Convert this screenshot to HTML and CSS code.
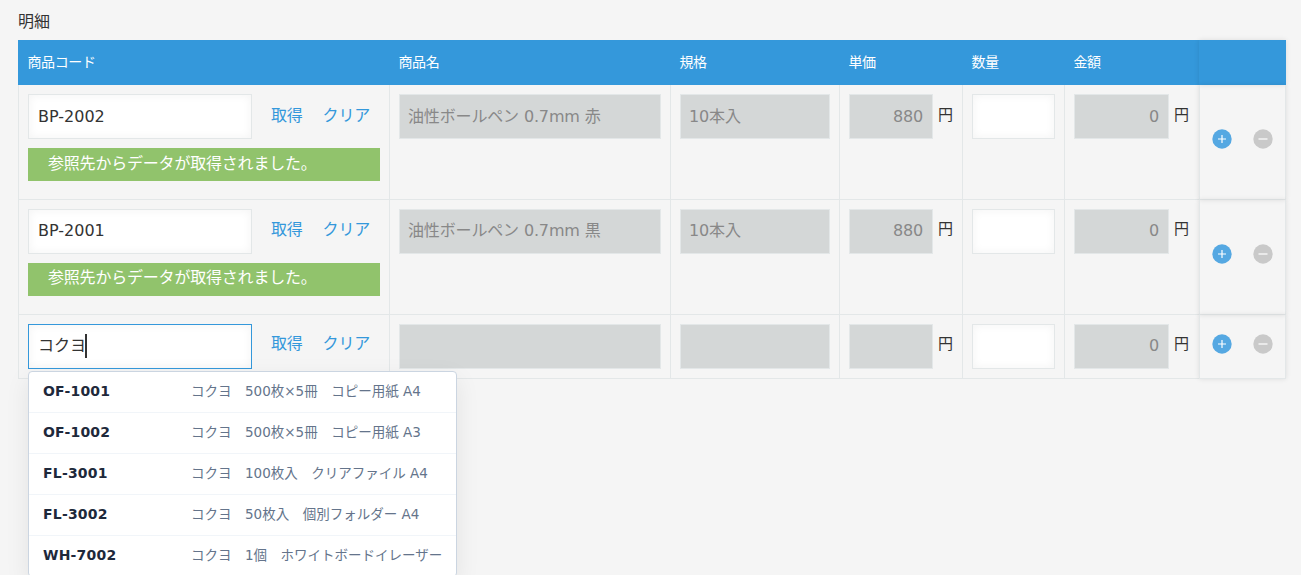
FILE: index.html
```html
<!DOCTYPE html>
<html lang="ja">
<head>
  <meta charset="UTF-8">
  <meta name="viewport" content="width=device-width, initial-scale=1.0">
  <title>明細</title>
  <link rel="stylesheet" href="styles.css">
</head>
<body>
  <div class="subtable">
    <div class="subtable-label">明細</div>

    <div class="row header">
      <div class="th">商品コード</div>
      <div class="th">商品名</div>
      <div class="th">規格</div>
      <div class="th">単価</div>
      <div class="th">数量</div>
      <div class="th">金額</div>
      <div class="th actions"></div>
    </div>

    <div class="row">
      <div class="cell">
        <div class="lookup">
          <div class="input code">BP-2002</div>
          <a class="link">取得</a>
          <a class="link">クリア</a>
        </div>
        <div class="success">参照先からデータが取得されました。</div>
      </div>
      <div class="cell"><div class="input disabled">油性ボールペン 0.7mm 赤</div></div>
      <div class="cell"><div class="input disabled">10本入</div></div>
      <div class="cell unit-cell"><div class="input disabled number">880</div><span class="unit">円</span></div>
      <div class="cell"><div class="input"></div></div>
      <div class="cell unit-cell amount"><div class="input disabled number">0</div><span class="unit">円</span></div>
      <div class="cell actions">
        <svg class="icon add" viewBox="0 0 20 20"><circle cx="10" cy="10" r="9.7"/><path d="M6 10h8M10 6v8"/></svg>
        <svg class="icon remove" viewBox="0 0 20 20"><circle cx="10" cy="10" r="9.7"/><path d="M5.5 10h9"/></svg>
      </div>
    </div>

    <div class="row tight">
      <div class="cell">
        <div class="lookup">
          <div class="input code">BP-2001</div>
          <a class="link">取得</a>
          <a class="link">クリア</a>
        </div>
        <div class="success">参照先からデータが取得されました。</div>
      </div>
      <div class="cell"><div class="input disabled">油性ボールペン 0.7mm 黒</div></div>
      <div class="cell"><div class="input disabled">10本入</div></div>
      <div class="cell unit-cell"><div class="input disabled number">880</div><span class="unit">円</span></div>
      <div class="cell"><div class="input"></div></div>
      <div class="cell unit-cell amount"><div class="input disabled number">0</div><span class="unit">円</span></div>
      <div class="cell actions">
        <svg class="icon add" viewBox="0 0 20 20"><circle cx="10" cy="10" r="9.7"/><path d="M6 10h8M10 6v8"/></svg>
        <svg class="icon remove" viewBox="0 0 20 20"><circle cx="10" cy="10" r="9.7"/><path d="M5.5 10h9"/></svg>
      </div>
    </div>

    <div class="row tight short">
      <div class="cell">
        <div class="lookup">
          <div class="input code focused">コクヨ<span class="caret"></span></div>
          <a class="link">取得</a>
          <a class="link">クリア</a>

          <!-- Suggestions -->
          <div class="suggest">
            <div class="suggest-item"><b class="suggest-code">OF-1001</b><span class="suggest-name">コクヨ　500枚×5冊　コピー用紙 A4</span></div>
            <div class="suggest-item"><b class="suggest-code">OF-1002</b><span class="suggest-name">コクヨ　500枚×5冊　コピー用紙 A3</span></div>
            <div class="suggest-item"><b class="suggest-code">FL-3001</b><span class="suggest-name">コクヨ　100枚入　クリアファイル A4</span></div>
            <div class="suggest-item"><b class="suggest-code">FL-3002</b><span class="suggest-name">コクヨ　50枚入　個別フォルダー A4</span></div>
            <div class="suggest-item"><b class="suggest-code">WH-7002</b><span class="suggest-name">コクヨ　1個　ホワイトボードイレーザー</span></div>
          </div>
        </div>
      </div>
      <div class="cell"><div class="input disabled"></div></div>
      <div class="cell"><div class="input disabled"></div></div>
      <div class="cell unit-cell"><div class="input disabled number"></div><span class="unit">円</span></div>
      <div class="cell"><div class="input"></div></div>
      <div class="cell unit-cell amount"><div class="input disabled number">0</div><span class="unit">円</span></div>
      <div class="cell actions">
        <svg class="icon add" viewBox="0 0 20 20"><circle cx="10" cy="10" r="9.7"/><path d="M6 10h8M10 6v8"/></svg>
        <svg class="icon remove" viewBox="0 0 20 20"><circle cx="10" cy="10" r="9.7"/><path d="M5.5 10h9"/></svg>
      </div>
    </div>
  </div>
</body>
</html>
```
FILE: styles.css
```css
* {
  box-sizing: border-box;
}

body {
  margin: 0;
  height: 575px;
  overflow: hidden;
  background: #f5f5f5;
  color: #333;
  font-family: "DejaVu Sans", "Noto Sans CJK JP", sans-serif;
  font-size: 16px;
}

.subtable {
  width: 1268px;
  margin-left: 18px;
}

.subtable-label {
  height: 40px;
  padding-top: 10px;
  line-height: 24px;
}

.row {
  display: grid;
  grid-template-columns: 371px 281px 169px 123px 102px 135px 87px;
  height: 115px;
}

.header {
  height: 45px;
  background: #3498db;
  color: #fff;
  font-size: 14px;
  letter-spacing: -0.4px;
}

.short {
  height: 64px;
}

.th {
  padding: 12px 9.5px;
  line-height: 20px;
}

.cell {
  padding: 9px;
  border-left: 1px solid #e3e7e8;
  border-bottom: 1px solid #e3e7e8;
}

.lookup {
  position: relative;
  display: flex;
}

.input {
  height: 45px;
  padding: 0 9px;
  border: 1px solid #e3e7e8;
  background: #fff;
  box-shadow: inset 0 0 8px 1px #f5f5f5;
  line-height: 43px;
  white-space: nowrap;
}

.code {
  display: flex;
  flex-shrink: 0;
  align-items: center;
  width: 224px;
  margin-right: 19px;
}

.disabled {
  padding-left: 8px;
  background: #d4d7d7;
  box-shadow: none;
  color: #888;
  letter-spacing: -0.15px;
}

.focused {
  border-color: #3498db;
}

.caret {
  width: 2px;
  height: 24px;
  margin-left: -1px;
  background: #333;
}

.link {
  flex-shrink: 0;
  margin-right: 20px;
  color: #3498db;
  letter-spacing: -0.2px;
  line-height: 44px;
  white-space: nowrap;
}

.success {
  height: 33px;
  margin-top: 9px;
  padding-left: 20px;
  background: #91c36c;
  color: #fff;
  letter-spacing: -0.2px;
  line-height: 32px;
}

.unit-cell {
  display: flex;
}

.number {
  flex: 1;
  text-align: right;
}

.unit {
  width: 20px;
  padding-left: 5px;
  font-size: 15px;
  line-height: 43px;
}

.amount .unit {
  width: 21px;
}

.tight .input,
.tight .unit {
  line-height: 41px;
}

.tight .code {
  padding-bottom: 2px;
}

.tight .link {
  line-height: 42px;
}

.tight .success {
  line-height: 30px;
}

.short .link {
  line-height: 40px;
}

.actions {
  display: flex;
  align-items: center;
  gap: 21px;
  padding: 0 0 6px 11.5px;
  border-right: 1px solid #e3e7e8;
  box-shadow: 0 0 5px rgba(0, 0, 0, 0.1);
}

.th.actions {
  border-right: 0;
}

.icon {
  width: 20px;
  height: 20px;
}

.icon path {
  stroke: #fff;
  stroke-width: 1.2;
  fill: none;
}

.add circle {
  fill: #55a8e2;
}

.remove circle {
  fill: #c9c9c9;
}

.suggest {
  position: absolute;
  top: 47px;
  left: 0;
  z-index: 10;
  width: 429px;
  border: 1px solid #cbd5e1;
  border-radius: 4px;
  background: #fff;
  box-shadow: 0 8px 24px rgba(0, 0, 0, 0.08);
  font-size: 13.5px;
}

.suggest-item {
  display: flex;
  height: 41px;
  padding: 0 14px;
  border-bottom: 1px solid #f1f5f9;
  line-height: 38px;
  white-space: nowrap;
}

.suggest-item:last-child {
  height: 40px;
  border-bottom: 0;
}

.suggest-code {
  flex-shrink: 0;
  width: 148px;
  color: #1e293b;
  font-size: 14px;
  letter-spacing: 0.2px;
}

.suggest-name {
  color: #64748b;
}
```
